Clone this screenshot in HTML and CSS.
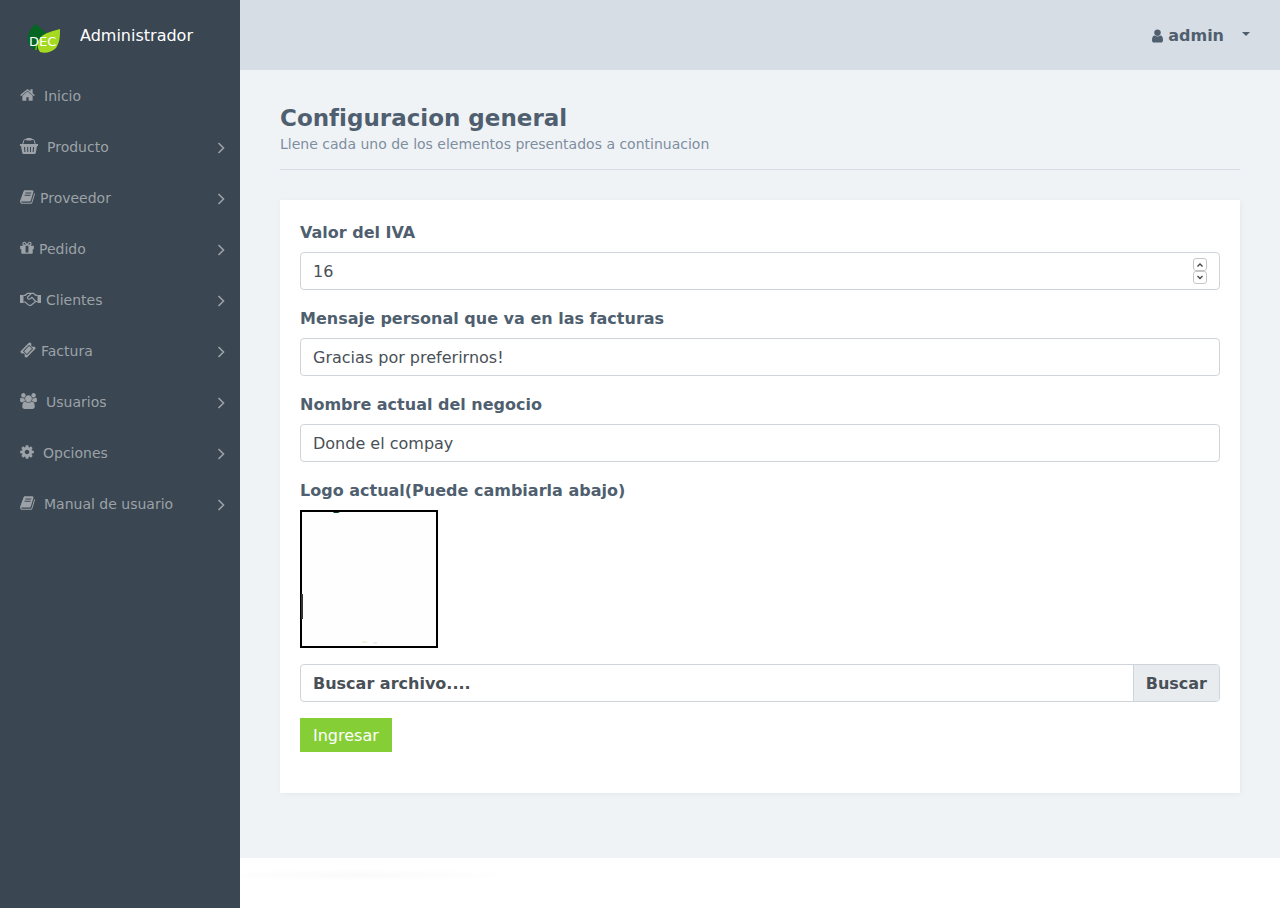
FILE: index.html
```
<!DOCTYPE html>
<html lang="es">
<head>
<meta charset="utf-8">
<meta name="viewport" content="width=device-width, initial-scale=1">
<title>Configuracion general</title>
<link rel="stylesheet" href="styles.css">
</head>
<body>
<svg class="sprite" aria-hidden="true">
  <symbol id="book" viewBox="64 0 1664 1792"><path d="M1703 478q40 57 18 129l-275 906q-19 64-76.500 107.500t-122.500 43.500h-923q-77 0-148.500-53.500t-99.500-131.500q-24-67-2-127 0-4 3-27t4-37q1-8-3-21.500t-3-19.500q2-11 8-21t16.500-23.500 16.500-23.500q23-38 45-91.500t30-91.500q3-10 .5-30t-.5-28q3-11 17-28t17-23q21-36 42-92t25-90q1-9-2.500-32t.5-28q4-13 22-30.500t22-22.500q19-26 42.500-84.500t27.500-96.500q1-8-3-25.500t-2-26.500q2-8 9-18t18-23 17-21q8-12 16.500-30.500t15-35 16-36 19.500-32 26.500-23.500 36-11.500 47.500 5.500l-1 3q38-9 51-9h761q74 0 114 56t18 130l-274 906q-36 119-71.500 153.500t-128.500 34.500h-869q-27 0-38 15-11 16-1 43 24 70 144 70h923q29 0 56-15.500t35-41.500l300-987q7-22 5-57 38 15 59 43zm-1064 2q-4 13 2 22.500t20 9.500h608q13 0 25.500-9.500t16.500-22.500l21-64q4-13-2-22.500t-20-9.500h-608q-13 0-25.500 9.500t-16.500 22.500zm-83 256q-4 13 2 22.500t20 9.500h608q13 0 25.500-9.500t16.500-22.500l21-64q4-13-2-22.500t-20-9.500h-608q-13 0-25.500 9.500t-16.500 22.500z"/></symbol>
  <symbol id="chevron" viewBox="0 0 8 14"><path d="M1.500 2l5 5-5 5" fill="none" stroke="currentColor" stroke-width="1.600"/></symbol>
</svg>
<div class="app">
  <aside class="sidebar">
    <div class="brand">
      <svg class="brand-logo" viewBox="0 0 34 32" aria-label="DEC">
        <path d="M7 2C2 7-1 13 0 20c1 4 4 7 8 8l11-15C17 8 12 6 7 2z" fill="#056624"/>
        <path d="M32 7c-7 2-15 4-18 7-6 5-5 12-2 16 5 2 12 0 16-4 4-6 4-12 4-19z" fill="#a4da1f"/>
        <path d="M8 28c0-5 2-9 6-12" fill="none" stroke="#a4da1f"/>
        <text x="1" y="24" class="brand-mark">DEC</text>
      </svg>
      <span>Administrador</span>
    </div>
    <nav class="menu">
      <a href="#" class="wide"><svg class="icon w15" viewBox="64 0 1664 1792"><path d="M1472 992v480q0 26-19 45t-45 19h-384v-384h-256v384h-384q-26 0-45-19t-19-45v-480q0-1 .5-3t.5-3l575-474 575 474q1 2 1 6zm223-69l-62 74q-8 9-21 11h-3q-13 0-21-7l-692-577-692 577q-12 8-24 7-13-2-21-11l-62-74q-8-10-7-23.500t11-21.500l719-599q32-26 76-26t76 26l244 204v-195q0-14 9-23t23-9h192q14 0 23 9t9 23v408l219 182q10 8 11 21.500t-7 23.500z"/></svg>Inicio</a>
      <a href="#" class="wide"><svg class="icon w18" viewBox="0 0 18 16"><path fill-rule="evenodd" d="M0 6h18v2h-1l-1.200 6.700q-.2 1.300-1.300 1.300h-11q-1.100 0-1.300-1.300L1 8H0zM4 9l.4 5h1l-.3-5zM7.200 9v5h1V9zM10 9v5h1V9zM13 9l-.4 5h1l.5-5z"/><path d="M2.800 6l1-3.500q.3-1 1.300-1h7.800q1 0 1.300 1l1 3.500" fill="none" stroke="currentColor"/><path d="M6.500 0h5v2.500h-5z"/></svg>Producto<svg class="chevron"><use href="#chevron"/></svg></a>
      <a href="#"><svg class="icon w15"><use href="#book"/></svg>Proveedor<svg class="chevron"><use href="#chevron"/></svg></a>
      <a href="#"><svg class="icon w14" viewBox="128 0 1536 1792"><path d="M1056 1356v-716h-320v716q0 25 18 38.500t46 13.500h192q28 0 46-13.500t18-38.500zm-456-844h195l-126-161q-26-31-69-31-40 0-68 28t-28 68 28 68 68 28zm688-96q0-40-28-68t-68-28q-43 0-69 31l-125 161h194q40 0 68-28t28-68zm376 256v320q0 14-9 23t-23 9h-96v416q0 40-28 68t-68 28h-1088q-40 0-68-28t-28-68v-416h-96q-14 0-23-9t-9-23v-320q0-14 9-23t23-9h440q-93 0-158.500-65.500t-65.500-158.500 65.500-158.500 158.500-65.500q107 0 168 77l128 165 128-165q61-77 168-77 93 0 158.500 65.500t65.500 158.500-65.500 158.500-158.500 65.500h440q14 0 23 9t9 23z"/></svg>Pedido<svg class="chevron"><use href="#chevron"/></svg></a>
      <a href="#"><svg class="icon w21" viewBox="0 0 21 16"><path d="M0 4h3.500v8H0zM17.500 4H21v8h-3.500z"/><path d="M3.500 4.300h1.800L7.500 2.300h6l2.200 2h1.800M3.500 11h1.600l3 2.600q1.500 1.200 3 .6l4.500-3.700h1.900M11.200 2.600L7.400 6.300q.2 2.600 2.800 1.400l1.700-1.300 3.800 4.100" fill="none" stroke="currentColor" stroke-width="1.200"/></svg>Clientes<svg class="chevron"><use href="#chevron"/></svg></a>
      <a href="#"><svg class="icon w16" viewBox="0 0 1792 1792"><path d="M1024 452l316 316-572 572-316-316zm-211 979l618-618q19-19 19-45t-19-45l-362-362q-18-18-45-18t-45 18l-618 618q-19 19-19 45t19 45l362 362q18 18 45 18t45-18zm889-637l-907 908q-37 37-90.500 37t-90.500-37l-126-126q56-56 56-136t-56-136-136-56-136 56l-125-126q-37-37-37-90.500t37-90.500l907-906q37-37 90.500-37t90.500 37l125 125q-56 56-56 136t56 136 136 56 136-56l126 125q37 37 37 90.500t-37 90.500z"/></svg>Factura<svg class="chevron"><use href="#chevron"/></svg></a>
      <a href="#" class="wide"><svg class="icon w17" viewBox="-64 0 1920 1792"><path d="M529 896q-162 5-265 128h-134q-82 0-138-40.500t-56-118.500q0-353 124-353 6 0 43.500 21t97.500 42.500 119 21.500q67 0 133-23-5 37-5 66 0 139 81 256zm1071 637q0 120-73 189.500t-194 69.500h-874q-121 0-194-69.500t-73-189.500q0-53 3.500-103.500t14-109 26.500-108.500 43-97.500 62-81 85.500-53.500 111.500-20q10 0 43 21.500t73 48 107 48 135 21.500 135-21.500 107-48 73-48 43-21.500q61 0 111.500 20t85.500 53.500 62 81 43 97.500 26.500 108.500 14 109 3.500 103.500zm-1024-1277q0 106-75 181t-181 75-181-75-75-181 75-181 181-75 181 75 75 181zm704 384q0 159-112.500 271.500t-271.500 112.500-271.500-112.500-112.500-271.500 112.500-271.500 271.500-112.500 271.500 112.500 112.500 271.500zm576 225q0 78-56 118.500t-138 40.500h-134q-103-123-265-128 81-117 81-256 0-29-5-66 66 23 133 23 59 0 119-21.500t97.500-42.500 43.500-21q124 0 124 353zm-128-609q0 106-75 181t-181 75-181-75-75-181 75-181 181-75 181 75 75 181z"/></svg>Usuarios<svg class="chevron"><use href="#chevron"/></svg></a>
      <a href="#" class="wide"><svg class="icon w14" viewBox="128 0 1536 1792"><path d="M1152 896q0-106-75-181t-181-75-181 75-75 181 75 181 181 75 181-75 75-181zm512-109v222q0 12-8 23t-20 13l-185 28q-19 54-39 91 35 50 107 138 10 12 10 25t-9 23q-27 37-99 108t-94 71q-12 0-26-9l-138-108q-44 23-91 38-16 136-29 186-7 28-36 28h-222q-14 0-24.500-8.500t-11.500-21.500l-28-184q-49-16-90-37l-141 107q-10 9-25 9-14 0-25-11-126-114-165-168-7-10-7-23 0-12 8-23 15-21 51-66.500t54-70.500q-27-50-41-99l-183-27q-13-2-21-12.500t-8-23.500v-222q0-12 8-23t19-13l186-28q14-46 39-92-40-57-107-138-10-12-10-24 0-10 9-23 26-36 98.500-107.500t94.500-71.500q13 0 26 10l138 107q44-23 91-38 16-136 29-186 7-28 36-28h222q14 0 24.500 8.500t11.500 21.500l28 184q49 16 90 37l142-107q9-9 24-9 13 0 25 10 129 119 165 170 7 8 7 22 0 12-8 23-15 21-51 66.500t-54 70.500q26 50 41 98l183 28q13 2 21 12.500t8 23.500z"/></svg>Opciones<svg class="chevron"><use href="#chevron"/></svg></a>
      <a href="#" class="wide"><svg class="icon w15"><use href="#book"/></svg>Manual de usuario<svg class="chevron"><use href="#chevron"/></svg></a>
    </nav>
  </aside>
  <div class="page">
    <header class="topbar">
      <button type="button" class="profile">
        <svg class="profile-icon" viewBox="256 0 1280 1792" aria-hidden="true"><path d="M1536 1399q0 109-62.500 187t-150.500 78h-854q-88 0-150.500-78t-62.500-187q0-85 8.500-160.500t31.500-152 58.500-131 94-89 134.500-34.500q131 128 313 128t313-128q76 0 134.500 34.500t94 89 58.500 131 31.500 152 8.500 160.500zm-256-887q0 159-112.500 271.500t-271.500 112.500-271.500-112.500-112.500-271.500 112.500-271.500 271.500-112.500 271.500 112.500 112.500 271.500z"/></svg>
        <span>admin</span>
        <span class="caret"></span>
      </button>
    </header>
    <main class="content">
      <div class="heading">
        <h1>Configuracion general</h1>
        <p>Llene cada uno de los elementos presentados a continuacion</p>
      </div>
      <form class="card">
        <div class="field">
          <label for="iva">Valor del IVA</label>
          <div class="control number">
            <input id="iva" type="number" value="16">
            <div class="stepper">
              <button type="button" aria-label="Aumentar"><svg viewBox="0 0 8 6"><path d="M1.500 4.500L4 2l2.500 2.500"/></svg></button>
              <button type="button" aria-label="Disminuir"><svg viewBox="0 0 8 6"><path d="M1.500 1L4 3.500 6.500 1"/></svg></button>
            </div>
          </div>
        </div>
        <div class="field">
          <label for="mensaje">Mensaje personal que va en las facturas</label>
          <input class="control" id="mensaje" type="text" value="Gracias por preferirnos!">
        </div>
        <div class="field">
          <label for="nombre">Nombre actual del negocio</label>
          <input class="control" id="nombre" type="text" value="Donde el compay">
        </div>
        <div class="field">
          <label for="archivo">Logo actual(Puede cambiarla abajo)</label>
          <svg class="logo-preview" viewBox="0 0 138 138" role="img" aria-label="Logo actual">
            <path d="M1 1h136v136H1z" fill="#fefefe" stroke="#000" stroke-width="2"/>
            <path d="M33 2h7l-2 1h-4z" fill="#0b3d17"/>
            <path d="M2 84v25" stroke="#333" stroke-width="2"/>
            <path d="M62 132h5" stroke="#e8ebb4"/>
            <path d="M73 133h4" stroke="#d5e3df"/>
          </svg>
        </div>
        <div class="field">
          <label class="file" for="archivo">
            <input id="archivo" type="file">
            <span class="file-name">Buscar archivo....</span>
            <span class="file-browse">Buscar</span>
          </label>
        </div>
        <button type="submit" class="submit">Ingresar</button>
      </form>
    </main>
    <footer class="footer"></footer>
  </div>
</div>
</body>
</html>
```
FILE: styles.css
```
* { box-sizing: border-box; }
body {
  margin: 0;
  font: 16px/24px "DejaVu Sans", sans-serif;
  color: #4f5f6f;
  background: #fff;
}
button, input { font: inherit; color: inherit; }
.sprite { display: none; }
.app { display: flex; min-height: 100vh; }

.sidebar { flex: 0 0 240px; background: #3a4651; }
.brand {
  display: flex;
  align-items: center;
  gap: 18px;
  height: 70px;
  padding: 2px 28px 0;
  color: #fff;
}
.brand-logo { width: 34px; height: 32px; margin-top: 4px; overflow: visible; }
.brand-mark { font: 13px "DejaVu Sans", sans-serif; fill: #fff; }
.menu { display: flex; flex-direction: column; }
.menu a {
  display: flex;
  align-items: center;
  gap: 5px;
  padding: 16px 15px 14px 20px;
  font-size: 14px;
  line-height: 21px;
  color: #9ca2a8;
  text-decoration: none;
}
.menu a.wide { gap: 9px; }
.icon { height: 16px; margin-bottom: 3px; fill: currentColor; }
.w14 { width: 14px; }
.w15 { width: 15px; }
.w16 { width: 16px; }
.w17 { width: 17px; }
.w18 { width: 18px; }
.w21 { width: 21px; }
.chevron { width: 8px; height: 14px; margin-left: auto; }

.page { flex: 1; min-width: 0; display: flex; flex-direction: column; }
.topbar {
  display: flex;
  align-items: center;
  justify-content: flex-end;
  height: 70px;
  padding: 2px 30px 0;
  background: #d7dde4;
}
.profile {
  display: flex;
  align-items: center;
  gap: 5px;
  padding: 0;
  border: 0;
  background: none;
  font-weight: bold;
}
.profile-icon { width: 11px; height: 16px; fill: currentColor; }
.caret {
  margin-left: 13px;
  margin-bottom: 4px;
  border: 4px solid transparent;
  border-top-color: currentColor;
  border-bottom: 0;
}
.content { flex: 1; padding: 30px 40px 65px; background: #f0f3f6; }
.heading { padding: 4px 0 13px; margin-bottom: 30px; border-bottom: 1px solid #d7dde4; }
h1 { margin: 0; font-size: 23px; line-height: 28px; }
.heading p { margin: 0; padding: 2px 0; font-size: 14px; line-height: 20px; color: #7e8e9f; }

.card {
  padding: 20px 20px 41px;
  background: #fff;
  box-shadow: 1px 1px 5px rgba(126, 142, 159, 0.1);
}
.field { margin-bottom: 16px; }
.field label { display: block; margin-bottom: 6px; line-height: 26px; font-weight: bold; }
.control, .field .file {
  display: flex;
  width: 100%;
  height: 38px;
  margin: 0;
  padding: 0 12px;
  border: 1px solid #ced4da;
  border-radius: 4px;
  background: #fff;
  color: #495057;
}
.number { align-items: center; }
.number input {
  flex: 1;
  min-width: 0;
  padding: 2px 0 0;
  border: 0;
  outline: 0;
  background: none;
  appearance: textfield;
}
.number input::-webkit-inner-spin-button { appearance: none; }
.stepper { display: flex; flex-direction: column; }
.stepper button {
  display: flex;
  align-items: center;
  justify-content: center;
  width: 14px;
  height: 13px;
  padding: 0;
  border: 1px solid #c6c6c6;
  border-radius: 3px;
  background: #fff;
}
.stepper svg { width: 8px; height: 6px; fill: none; stroke: #444; stroke-width: 1.3; }
.logo-preview { display: block; width: 138px; height: 138px; }
.field .file {
  position: relative;
  align-items: stretch;
  padding-right: 0;
  overflow: hidden;
  line-height: 38px;
}
.file input { position: absolute; inset: 0; width: 100%; opacity: 0; }
.file-name { flex: 1; }
.file-browse { padding: 0 12px; border-left: 1px solid #ced4da; background: #e9ecef; }
.submit {
  display: block;
  height: 34px;
  padding: 2px 13px 0;
  border: 0;
  background: #85ce36;
  color: #fff;
}
.footer {
  height: 50px;
  background: radial-gradient(ellipse 160px 6px at 120px 17px, #fafafa, #fff);
}
```
